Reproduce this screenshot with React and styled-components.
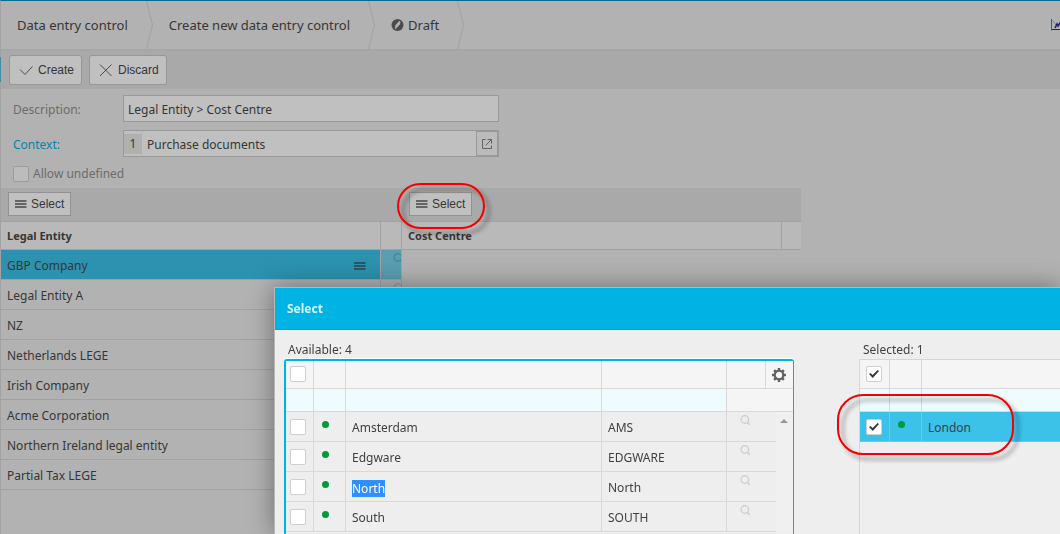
import React from "react";
import styled, { createGlobalStyle } from "styled-components";

const GlobalStyle = createGlobalStyle`
  * {
    box-sizing: border-box;
  }
  body {
    margin: 0;
    overflow: hidden;
    background: #b2b2b2;
    color: #363636;
    font-family: "Noto Sans", "Open Sans", sans-serif;
    font-size: 12px;
    line-height: 16px;
  }
  button,
  input {
    font: inherit;
    color: inherit;
    margin: 0;
  }
`;

const Page = styled.div`
  position: relative;
  min-height: 100vh;
  border-top: 1px solid #056d8b;
  border-left: 1px solid #a2a2a2;
`;
const Breadcrumbs = styled.nav`
  display: flex;
  height: 50px;
  overflow: hidden;
  border-bottom: 2px solid #a6a6a6;
`;
const Crumb = styled.a`
  display: flex;
  align-items: center;
  gap: 4px;
  padding: 0 18px 0 16px;
  font-size: 13px;
  color: #363636;
  text-decoration: none;
  white-space: nowrap;
`;
const CrumbArrow = styled.svg`
  flex: none;
  width: 7px;
  height: 48px;
  fill: none;
  stroke: #a0a0a0;
`;
const ChartLink = styled.a`
  flex: none;
  width: 9px;
  margin-left: auto;
  padding-top: 18px;
  overflow: hidden;
`;
const Toolbar = styled.div`
  position: relative;
  display: flex;
  gap: 7px;
  padding: 4px 8px;
  background: #a9a9a9;
`;
const ActiveMark = styled.span`
  position: absolute;
  left: -1px;
  top: 6px;
  width: 1px;
  height: 25px;
  background: #3f8fa8;
`;
const ToolButton = styled.button`
  display: flex;
  align-items: center;
  gap: 4px;
  height: 30px;
  padding: 0 7px 0 8px;
  border: 1px solid #979797;
  border-radius: 3px;
  background: #c0c0c0;
  font-family: "Liberation Sans", Arial, sans-serif;
`;
const Form = styled.form`
  display: grid;
  grid-template-columns: 110px 376px;
  row-gap: 8px;
  align-items: center;
  padding: 6px 12px;
`;
const Label = styled.label`
  padding-top: 2px;
  color: ${(props) => (props.$link ? "#0086ab" : "#6c6c6c")};
`;
const TextInput = styled.input`
  width: 100%;
  height: 27px;
  padding: 2px 4px 0;
  border: 1px solid #999;
  background: #c0c0c0;
  outline: none;
`;
const Lookup = styled.div`
  display: flex;
  align-items: center;
  height: 27px;
  border: 1px solid #999;
  background: #c0c0c0;
`;
const LookupCode = styled.span`
  width: 18px;
  margin-top: 1px;
  line-height: 20px;
  text-align: center;
  background: #b0b0b0;
`;
const LookupInput = styled.input`
  flex: 1;
  min-width: 0;
  padding: 2px 5px 0;
  border: 0;
  background: none;
  outline: none;
`;
const LookupButton = styled.button`
  display: flex;
  align-items: center;
  justify-content: center;
  width: 22px;
  height: 25px;
  padding: 0;
  border: 1px solid #999;
  background: #bbb;
`;
const CheckLabel = styled.label`
  grid-column: 1 / -1;
  display: flex;
  align-items: center;
  gap: 4px;
  padding-top: 1px;
  color: #6c6c6c;
`;
const Checkbox = styled.input.attrs({ type: "checkbox" })`
  appearance: none;
  display: block;
  flex: none;
  width: 16px;
  height: 16px;
  border: 1px solid ${(props) => (props.$dim ? "#9c9c9c" : "#cfcfcf")};
  border-radius: 2px;
  background: ${(props) => (props.$dim ? "#bcbcbc" : "#fff")};
  &:checked::after {
    content: "";
    display: block;
    width: 10px;
    height: 8px;
    margin: 3px 2px;
    background: #383838;
    clip-path: polygon(0 50%, 14% 36%, 36% 62%, 86% 0, 100% 14%, 38% 100%);
  }
`;

const Dimensions = styled.main`
  display: grid;
  grid-template-columns: 401px 399px;
`;
const Dimension = styled.section`
  min-width: 0;
`;
const DimensionBar = styled.div`
  display: flex;
  height: 33px;
  padding: 4px 7px;
  background: #a9a9a9;
`;
const SelectButton = styled.button`
  display: flex;
  align-items: center;
  gap: 4px;
  height: 24px;
  padding: 0 6px;
  border: 1px solid #929292;
  background: #c0c0c0;
  font-family: "Liberation Sans", Arial, sans-serif;
`;
const Anchor = styled.div`
  position: relative;
  display: flex;
`;
const Ring = styled.span`
  position: absolute;
  z-index: 5;
  inset: ${(props) => props.$inset};
  border: 2px solid #f50000;
  border-radius: 26px;
  filter: drop-shadow(5px 5px 2px rgba(0, 0, 0, 0.4));
  pointer-events: none;
`;
const LondonRing = styled(Ring)`
  width: 177px;
  height: 61px;
`;
const EntityTable = styled.table`
  width: 100%;
  table-layout: fixed;
  border-collapse: separate;
  border-spacing: 0;
`;
const EntityHead = styled.th`
  width: ${(props) => props.$width || "auto"};
  height: 29px;
  padding: 0 6px;
  border-top: 1px solid #a2a2a2;
  border-bottom: 1px solid #a2a2a2;
  border-right: ${(props) => (props.$last ? "0" : "1px")} solid #a2a2a2;
  background: #b9b9b9;
  font-size: 11px;
  text-align: left;
`;
const EntityCell = styled.td`
  height: 30px;
  padding: 3px 6px 0;
  border-bottom: 1px solid #a2a2a2;
  border-right: 1px solid #a2a2a2;
  background: ${(props) => (props.$active ? "#2c92af" : "transparent")};
`;
const EntityName = styled.div`
  display: flex;
  align-items: center;
  justify-content: space-between;
  padding-right: 8px;
`;
const EntityAction = styled.td`
  padding: 3px 0 0 12px;
  overflow: hidden;
  vertical-align: top;
  line-height: 0;
  border-bottom: 1px solid #a2a2a2;
  border-right: 1px solid #a2a2a2;
  background: ${(props) => (props.$active ? "#599eb1" : "transparent")};
`;

const Dialog = styled.section`
  position: fixed;
  top: 287px;
  left: 274px;
  right: 0;
  bottom: 0;
  display: flex;
  flex-direction: column;
  border-top: 1px solid #b8b8b8;
  border-left: 1px solid #b8b8b8;
  background: #eee;
  color: #3f3f3f;
  box-shadow: 0 0 24px rgba(0, 0, 0, 0.4);
`;
const DialogTitle = styled.h2`
  margin: 0;
  padding: 0 12px;
  font-size: 12px;
  line-height: 41px;
  color: #d9f5fd;
  background: #00b3e5;
  border-bottom: 1px solid #00a6d6;
`;
const DialogBody = styled.div`
  flex: 1;
  display: grid;
  grid-template-columns: 510px 1fr;
  gap: 65px;
  padding: 11px 0 0 9px;
`;
const Picker = styled.div`
  display: flex;
  flex-direction: column;
  min-width: 0;
`;
const PickerLabel = styled.div`
  padding: 0 4px;
  line-height: 18px;
`;
const PickerBox = styled.div`
  position: relative;
  flex: 1;
  border: solid ${(props) => (props.$focused ? "#00b3e5" : "#d6d6d6")};
  border-width: ${(props) => (props.$focused ? "2px 1px 0 2px" : "1px 0 0 1px")};
  border-radius: ${(props) => (props.$focused ? "3px 3px 0 0" : "0")};
  box-shadow: ${(props) => (props.$focused ? "0 -1px 0 #fff" : "none")};
`;
const PickerTable = styled.table`
  width: 100%;
  table-layout: fixed;
  border-collapse: separate;
  border-spacing: 0;
`;
const PickerHead = styled.th`
  width: ${(props) => props.$width || "auto"};
  height: ${(props) => (props.$tall ? "29px" : "28px")};
  padding: ${(props) => props.$pad || "0 5px"};
  border-bottom: 1px solid #d9d9d9;
  border-right: ${(props) => (props.$last ? "0" : "1px")} solid #d9d9d9;
  background: #f5f5f5;
`;
const FilterCell = styled.td`
  height: 23px;
  padding: 0;
  border-bottom: 1px solid #d9d9d9;
  border-right: ${(props) => (props.$last ? "0" : "1px")} solid #d9d9d9;
  background: ${(props) => (props.$blank ? "#f5f5f5" : "#effcff")};
`;
const PickerRow = styled.tr`
  background: ${(props) => (props.$active ? "#3cc1e8" : "transparent")};
`;
const PickerCell = styled.td`
  height: 30px;
  padding: 3px 6px 0;
  border-bottom: 1px solid ${(props) => (props.$active ? "#63cceb" : "#d9d9d9")};
  border-right: ${(props) => (props.$last ? "0" : "1px")} solid
    ${(props) => (props.$active ? "#63cceb" : "#d9d9d9")};
`;
const CheckCell = styled(PickerCell)`
  padding: ${(props) => props.$pad};
`;
const IconCell = styled(PickerCell)`
  padding: ${(props) => props.$pad};
  vertical-align: top;
  line-height: 0;
`;
const ScrollCell = styled.td`
  padding: 7px 0 0 4px;
  vertical-align: top;
  line-height: 0;
  background: #f0f0f0;
`;
const ScrollArrow = styled.svg`
  width: 8px;
  height: 4px;
  fill: #979797;
`;
const Dot = styled.span`
  display: inline-block;
  width: 7px;
  height: 7px;
  border-radius: 50%;
  background: #009a3d;
`;
const Marked = styled.mark`
  display: block;
  width: fit-content;
  line-height: 17px;
  color: #fff;
  background: #308eff;
`;
const GearButton = styled.button`
  display: block;
  width: 16px;
  height: 16px;
  padding: 0;
  border: 0;
  background: none;
`;

const entities = [
  "GBP Company",
  "Legal Entity A",
  "NZ",
  "Netherlands LEGE",
  "Irish Company",
  "Acme Corporation",
  "Northern Ireland legal entity",
  "Partial Tax LEGE",
];

const available = [
  { name: "Amsterdam", code: "AMS" },
  { name: "Edgware", code: "EDGWARE" },
  { name: "North", code: "North", marked: true },
  { name: "South", code: "SOUTH" },
];

function MenuIcon({ color = "#666" }) {
  return (
    <svg width="12" height="8" viewBox="0 0 12 8" fill={color}>
      <path d="M0 0h11.500v2H0zM0 3h11.500v2H0zM0 6h11.500v2H0z" />
    </svg>
  );
}

function SearchIcon({ color = "#ccc" }) {
  return (
    <svg width="11" height="11" viewBox="0 0 11 11" fill="none" stroke={color}>
      <circle cx="4.800" cy="4.500" r="3.800" strokeWidth="1.200" />
      <path d="M7.300 7.200L9.800 9.800" strokeWidth="1.600" />
    </svg>
  );
}

function GearIcon() {
  return (
    <svg width="16" height="16" viewBox="0 0 16 16" fill="none" stroke="#606060">
      <circle cx="8" cy="8" r="4.300" strokeWidth="2.200" />
      <path
        d="M8 1v2.500M8 12.500V15M1 8h2.500M12.500 8H15M3.100 3.100l1.700 1.700M11.200 11.200l1.700 1.700M3.100 12.900l1.700-1.700M11.200 4.800l1.700-1.700"
        strokeWidth="2.400"
      />
    </svg>
  );
}

function Arrow() {
  return (
    <CrumbArrow viewBox="0 0 7 48">
      <path d="M0.500 0L6.500 24L0.500 48" />
    </CrumbArrow>
  );
}

function Select() {
  return (
    <SelectButton type="button">
      <MenuIcon />
      Select
    </SelectButton>
  );
}

function Entities() {
  return (
    <EntityTable>
      <thead>
        <tr>
          <EntityHead>Legal Entity</EntityHead>
          <EntityHead $width="21px" aria-label="Lookup" />
        </tr>
      </thead>
      <tbody>
        {entities.map((name, i) => (
          <tr key={name}>
            <EntityCell $active={i === 0}>
              <EntityName>
                {name}
                {i === 0 && <MenuIcon color="#2d5664" />}
              </EntityName>
            </EntityCell>
            <EntityAction $active={i === 0}>
              <SearchIcon color={i === 0 ? "#468393" : "#999"} />
            </EntityAction>
          </tr>
        ))}
      </tbody>
    </EntityTable>
  );
}

function Available() {
  return (
    <Picker>
      <PickerLabel>Available: 4</PickerLabel>
      <PickerBox $focused>
        <PickerTable>
          <colgroup>
            <col style={{ width: 28 }} />
            <col style={{ width: 32 }} />
            <col />
            <col style={{ width: 125 }} />
            <col style={{ width: 39 }} />
            <col style={{ width: 10 }} />
            <col style={{ width: 17 }} />
          </colgroup>
          <thead>
            <tr>
              <PickerHead $pad="0 0 1px 4px">
                <Checkbox aria-label="Select all available" />
              </PickerHead>
              <PickerHead />
              <PickerHead />
              <PickerHead />
              <PickerHead />
              <PickerHead colSpan={2} $last>
                <GearButton type="button" aria-label="Settings">
                  <GearIcon />
                </GearButton>
              </PickerHead>
            </tr>
          </thead>
          <tbody>
            <tr>
              <FilterCell />
              <FilterCell />
              <FilterCell />
              <FilterCell />
              <FilterCell colSpan={3} $blank $last />
            </tr>
            {available.map((item, i) => (
              <PickerRow key={item.name}>
                <CheckCell $pad="1px 0 0 4px">
                  <Checkbox aria-label={item.name} />
                </CheckCell>
                <IconCell $pad="9px 0 0 8px">
                  <Dot />
                </IconCell>
                <PickerCell>
                  {item.marked ? <Marked>{item.name}</Marked> : item.name}
                </PickerCell>
                <PickerCell>{item.code}</PickerCell>
                <IconCell colSpan={2} $pad="3px 0 0 13px" $last>
                  <SearchIcon />
                </IconCell>
                <ScrollCell>
                  {i === 0 && (
                    <ScrollArrow viewBox="0 0 8 4">
                      <path d="M4 0L8 4H0z" />
                    </ScrollArrow>
                  )}
                </ScrollCell>
              </PickerRow>
            ))}
          </tbody>
        </PickerTable>
      </PickerBox>
    </Picker>
  );
}

function Selected() {
  return (
    <Picker>
      <PickerLabel>Selected: 1</PickerLabel>
      <PickerBox>
        <PickerTable>
          <thead>
            <tr>
              <PickerHead $width="30px" $pad="0 0 0 6px" $tall>
                <Checkbox defaultChecked aria-label="Select all selected" />
              </PickerHead>
              <PickerHead $width="32px" />
              <PickerHead $last />
            </tr>
          </thead>
          <tbody>
            <tr>
              <FilterCell />
              <FilterCell />
              <FilterCell $last />
            </tr>
            <PickerRow $active>
              <CheckCell $active $pad="1px 0 0 6px">
                <Checkbox defaultChecked aria-label="London" />
              </CheckCell>
              <IconCell $active $pad="9px 0 0 8px">
                <Dot />
              </IconCell>
              <PickerCell $active $last>
                London
              </PickerCell>
            </PickerRow>
          </tbody>
        </PickerTable>
        <LondonRing $inset="34px auto auto -23px" />
      </PickerBox>
    </Picker>
  );
}

function App() {
  return (
    <>
      <GlobalStyle />
      <Page>
        <Breadcrumbs>
          <Crumb href="#">Data entry control</Crumb>
          <Arrow />
          <Crumb href="#">Create new data entry control</Crumb>
          <Arrow />
          <Crumb href="#">
            <svg width="13" height="12" viewBox="0 0 13 12">
              <circle cx="6.500" cy="6" r="6" fill="#4b4b4b" />
              <path d="M4 10L4.400 6.200L8.400 1.800L9.600 3L8.800 5.600L4.800 10z" fill="#b2b2b2" />
            </svg>
            Draft
          </Crumb>
          <Arrow />
          <ChartLink href="#" aria-label="Chart">
            <svg width="14" height="12" viewBox="0 0 14 12" fill="none">
              <path d="M0 0v11.500" stroke="#55536f" strokeWidth="2" />
              <path d="M1 10.500h13" stroke="#1f1f70" />
              <path d="M1 1l4 5" stroke="#5b8fa8" />
              <path d="M4 9L6 5L7 7L11 1" stroke="#22206c" strokeWidth="1.600" />
            </svg>
          </ChartLink>
        </Breadcrumbs>

        <Toolbar>
          <ActiveMark />
          <ToolButton type="button">
            <svg width="16" height="12" viewBox="0 0 16 12" fill="none" stroke="#4c4c4c">
              <path d="M2 5.500L7 10.500L14.500 2.500" />
            </svg>
            Create
          </ToolButton>
          <ToolButton type="button">
            <svg width="16" height="14" viewBox="0 0 16 14" fill="none" stroke="#4c4c4c">
              <path d="M2 1.500L13.500 13M13.500 1.500L2 13" />
            </svg>
            Discard
          </ToolButton>
        </Toolbar>

        <Form>
          <Label htmlFor="description">Description:</Label>
          <TextInput id="description" defaultValue="Legal Entity > Cost Centre" />
          <Label htmlFor="context" $link>
            Context:
          </Label>
          <Lookup>
            <LookupCode>1</LookupCode>
            <LookupInput id="context" defaultValue="Purchase documents" />
            <LookupButton type="button" aria-label="Open context">
              <svg width="12" height="12" viewBox="0 0 12 12" fill="none" stroke="#626262">
                <path d="M4.500 1.500h-3v9h9v-3M6.500 1.500h4v4M10.500 1.500L4.500 7.500" />
              </svg>
            </LookupButton>
          </Lookup>
          <CheckLabel>
            <Checkbox $dim />
            Allow undefined
          </CheckLabel>
        </Form>

        <Dimensions>
          <Dimension>
            <DimensionBar>
              <Select />
            </DimensionBar>
            <Entities />
          </Dimension>
          <Dimension>
            <DimensionBar>
              <Anchor>
                <Select />
                <Ring $inset="-9px -13px -12px -12px" />
              </Anchor>
            </DimensionBar>
            <EntityTable>
              <thead>
                <tr>
                  <EntityHead>Cost Centre</EntityHead>
                  <EntityHead $width="19px" $last aria-label="Lookup" />
                </tr>
              </thead>
            </EntityTable>
          </Dimension>
        </Dimensions>

        <Dialog role="dialog" aria-label="Select">
          <DialogTitle>Select</DialogTitle>
          <DialogBody>
            <Available />
            <Selected />
          </DialogBody>
        </Dialog>
      </Page>
    </>
  );
}

export default App;
